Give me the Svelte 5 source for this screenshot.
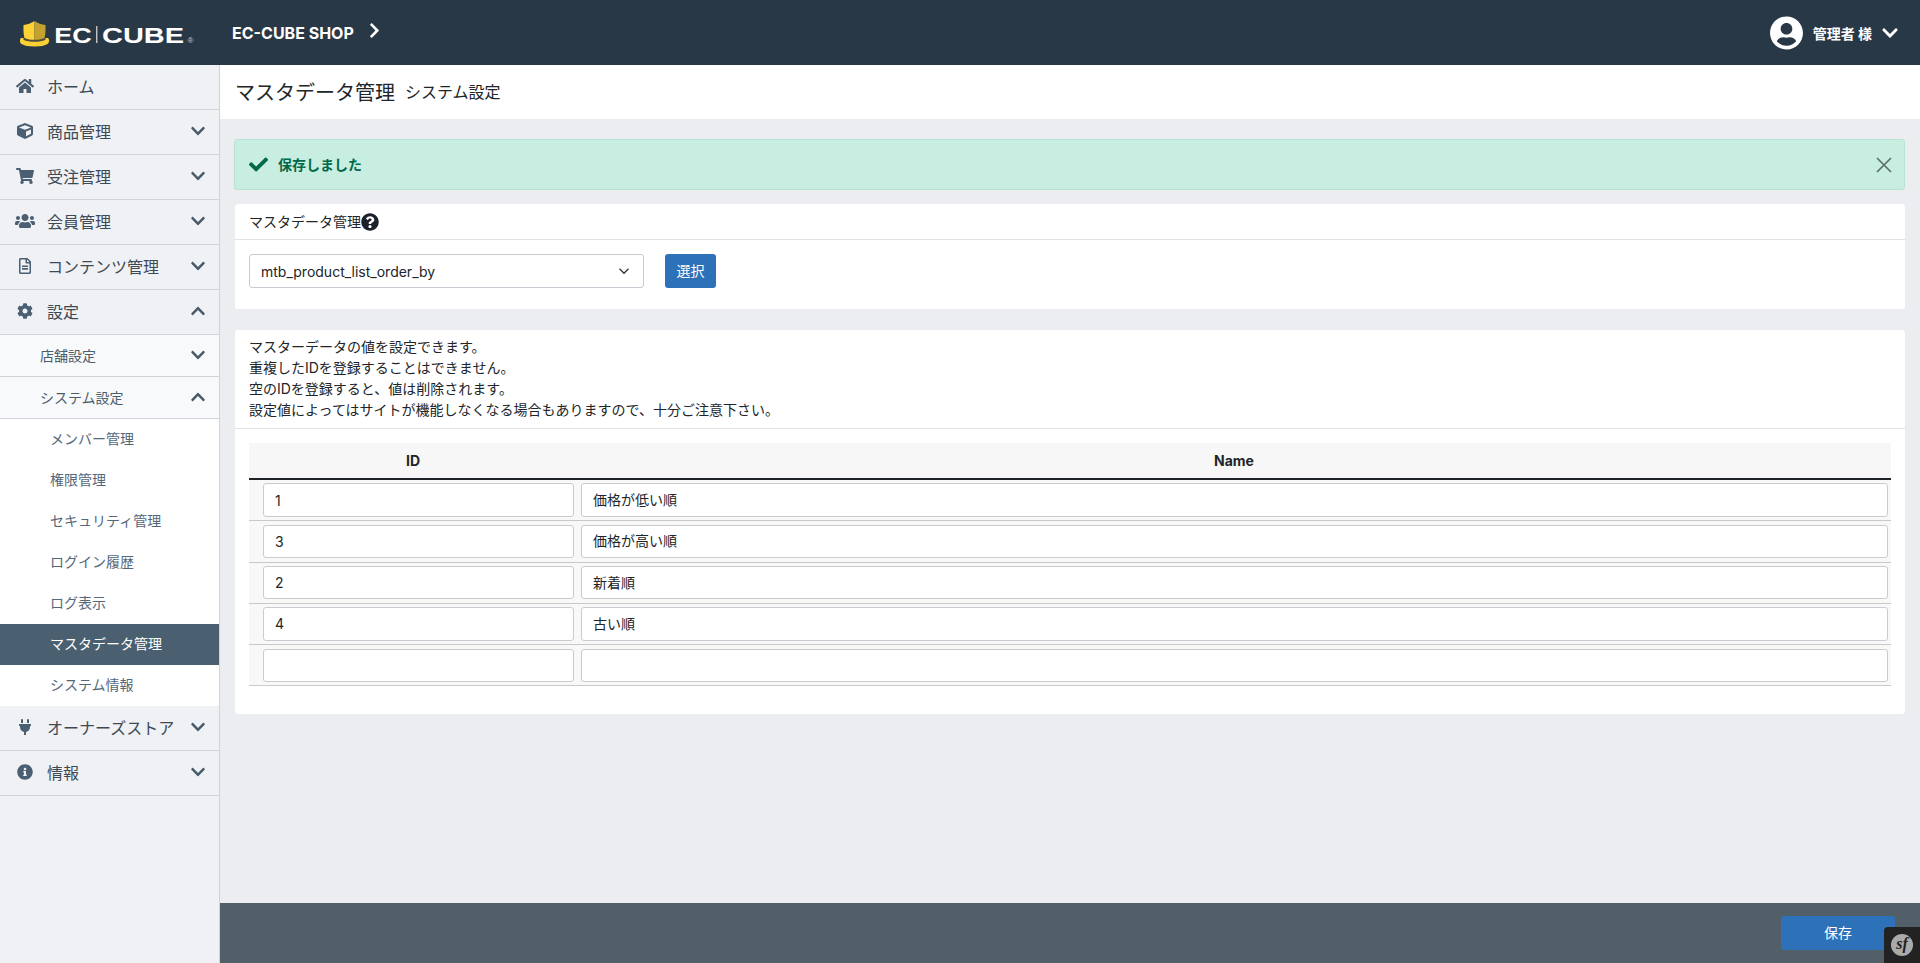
<script>
  // EC-CUBE admin: master data page
  const icons = {
    home: ['0 0 576 512', 'M280.37 148.26L96 300.11V464a16 16 0 0 0 16 16l112.06-.29a16 16 0 0 0 15.92-16V368a16 16 0 0 1 16-16h64a16 16 0 0 1 16 16v95.64a16 16 0 0 0 16 16.05L464 480a16 16 0 0 0 16-16V300L295.67 148.26a12.19 12.19 0 0 0-15.3 0zM571.6 251.47L488 182.56V44.05a12 12 0 0 0-12-12h-56a12 12 0 0 0-12 12v72.61L318.47 43a48 48 0 0 0-61 0L4.34 251.47a12 12 0 0 0-1.6 16.9l25.5 31A12 12 0 0 0 45.15 301l235.22-193.74a12.19 12.19 0 0 1 15.3 0L530.9 301a12 12 0 0 0 16.9-1.6l25.5-31a12 12 0 0 0-1.7-16.93z'],
    cube: ['0 0 512 512', 'M239.1 6.3l-208 78c-18.7 7-31.1 25-31.1 45v225.1c0 18.2 10.3 34.8 26.5 42.9l208 104c13.5 6.8 29.4 6.8 42.9 0l208-104c16.3-8.1 26.5-24.8 26.5-42.9V129.3c0-20-12.4-37.9-31.1-44.9l-208-78C262 2.2 250 2.2 239.1 6.3zM256 68.4l192 72v1.1l-192 78-192-78v-1.1l192-72zm32 356V275.5l160-65v133.9l-160 80z'],
    cart: ['0 0 576 512', 'M528.12 301.319l47.273-208C578.806 78.301 567.391 64 551.99 64H159.208l-9.166-44.81C147.758 8.021 137.93 0 126.529 0H24C10.745 0 0 10.745 0 24v16c0 13.255 10.745 24 24 24h69.883l70.248 343.435C147.325 417.1 136 435.222 136 456c0 30.928 25.072 56 56 56s56-25.072 56-56c0-15.674-6.447-29.835-16.824-40h209.647C430.447 426.165 424 440.326 424 456c0 30.928 25.072 56 56 56s56-25.072 56-56c0-22.172-12.888-41.332-31.579-50.405l5.517-24.276c3.413-15.018-8.002-29.319-23.403-29.319H218.117l-6.545-32h293.145c11.206 0 20.92-7.754 23.403-18.681z'],
    users: ['0 0 640 512', 'M96 224c35.3 0 64-28.7 64-64s-28.7-64-64-64-64 28.7-64 64 28.7 64 64 64zm448 0c35.3 0 64-28.7 64-64s-28.7-64-64-64-64 28.7-64 64 28.7 64 64 64zm32 32h-64c-17.6 0-33.5 7.1-45.1 18.6 40.3 22.1 68.9 62 75.1 109.4h66c17.7 0 32-14.3 32-32v-32c0-35.3-28.7-64-64-64zm-256 0c61.9 0 112-50.1 112-112S381.9 32 320 32 208 82.1 208 144s50.1 112 112 112zm76.8 32h-8.3c-20.8 10-43.9 16-68.5 16s-47.6-6-68.5-16h-8.3C179.6 288 128 339.6 128 403.2V432c0 26.5 21.5 48 48 48h288c26.5 0 48-21.5 48-48v-28.8c0-63.6-51.6-115.2-115.2-115.2zm-223.7-13.4C161.5 263.1 145.6 256 128 256H64c-35.3 0-64 28.7-64 64v32c0 17.7 14.3 32 32 32h65.9c6.3-47.4 34.9-87.3 75.2-109.4z'],
    file: ['0 0 384 512', 'M288 248v28c0 6.6-5.4 12-12 12H108c-6.6 0-12-5.4-12-12v-28c0-6.6 5.4-12 12-12h168c6.6 0 12 5.4 12 12zm-12 72H108c-6.6 0-12 5.4-12 12v28c0 6.6 5.4 12 12 12h168c6.6 0 12-5.4 12-12v-28c0-6.6-5.4-12-12-12zm108-188.1V464c0 26.5-21.5 48-48 48H48c-26.5 0-48-21.5-48-48V48C0 21.5 21.5 0 48 0h204.1C264.8 0 277 5.1 286 14.1L369.9 98c9 8.9 14.1 21.2 14.1 33.9zm-128-80V128h76.1L256 51.9zM336 464V176H232c-13.3 0-24-10.7-24-24V48H48v416h288z'],
    cog: ['0 0 512 512', 'M487.4 315.7l-42.6-24.6c4.3-23.2 4.3-47 0-70.2l42.6-24.6c4.9-2.8 7.1-8.6 5.5-14-11.1-35.6-30-67.8-54.7-94.6-3.8-4.1-10-5.1-14.8-2.3L380.8 110c-17.9-15.4-38.5-27.3-60.8-35.1V25.8c0-5.6-3.9-10.5-9.4-11.7-36.7-8.2-74.3-7.8-109.2 0-5.5 1.2-9.4 6.1-9.4 11.7V75c-22.2 7.9-42.8 19.8-60.8 35.1L88.7 85.5c-4.9-2.8-11-1.9-14.8 2.3-24.7 26.7-43.6 58.9-54.7 94.6-1.7 5.4.6 11.2 5.5 14L67.3 221c-4.3 23.2-4.3 47 0 70.2l-42.6 24.6c-4.9 2.8-7.1 8.6-5.5 14 11.1 35.6 30 67.8 54.7 94.6 3.8 4.1 10 5.1 14.8 2.3l42.6-24.6c17.9 15.4 38.5 27.3 60.8 35.1v49.2c0 5.6 3.9 10.5 9.4 11.7 36.7 8.2 74.3 7.8 109.2 0 5.5-1.2 9.4-6.1 9.4-11.7v-49.2c22.2-7.9 42.8-19.8 60.8-35.1l42.6 24.6c4.9 2.8 11 1.9 14.8-2.3 24.7-26.7 43.6-58.9 54.7-94.6 1.5-5.5-.7-11.3-5.6-14.1zM256 336c-44.1 0-80-35.9-80-80s35.9-80 80-80 80 35.9 80 80-35.9 80-80 80z'],
    plug: ['0 0 384 512', 'M320,32a32,32,0,0,0-64,0v96h64Zm48,128H16A16,16,0,0,0,0,176v32a16,16,0,0,0,16,16H32v32A160.07,160.07,0,0,0,160,412.8V512h64V412.8A160.07,160.07,0,0,0,352,256V224h16a16,16,0,0,0,16-16V176A16,16,0,0,0,368,160ZM128,32a32,32,0,0,0-64,0v96h64Z'],
    info: ['0 0 512 512', 'M256 8C119.043 8 8 119.083 8 256c0 136.997 111.043 248 248 248s248-111.003 248-248C504 119.083 392.957 8 256 8zm0 110c23.196 0 42 18.804 42 42s-18.804 42-42 42-42-18.804-42-42 18.804-42 42-42zm56 254c0 6.627-5.373 12-12 12h-88c-6.627 0-12-5.373-12-12v-24c0-6.627 5.373-12 12-12h12v-64h-12c-6.627 0-12-5.373-12-12v-24c0-6.627 5.373-12 12-12h64c6.627 0 12 5.373 12 12v100h12c6.627 0 12 5.373 12 12v24z']
  };

  const chevronDown = 'M207.029 381.476L12.686 187.132c-9.373-9.373-9.373-24.569 0-33.941l22.667-22.667c9.357-9.357 24.522-9.375 33.901-.04L224 284.505l154.745-154.021c9.379-9.335 24.544-9.317 33.901.04l22.667 22.667c9.373 9.373 9.373 24.569 0 33.941L240.971 381.476c-9.373 9.372-24.569 9.372-33.942 0z';
  const chevronUp = 'M240.971 130.524l194.343 194.343c9.373 9.373 9.373 24.569 0 33.941l-22.667 22.667c-9.357 9.357-24.522 9.375-33.901.04L224 227.495 69.255 381.516c-9.379 9.335-24.544 9.317-33.901-.04l-22.667-22.667c-9.373-9.373-9.373-24.569 0-33.941L207.03 130.525c9.372-9.373 24.568-9.373 33.941-.001z';

  const before = [
    { icon: 'home', label: 'ホーム' },
    { icon: 'cube', label: '商品管理', arrow: chevronDown },
    { icon: 'cart', label: '受注管理', arrow: chevronDown },
    { icon: 'users', label: '会員管理', arrow: chevronDown },
    { icon: 'file', label: 'コンテンツ管理', arrow: chevronDown },
    { icon: 'cog', label: '設定', arrow: chevronUp }
  ];
  const after = [
    { icon: 'plug', label: 'オーナーズストア', arrow: chevronDown },
    { icon: 'info', label: '情報', arrow: chevronDown }
  ];
  const leaves = ['メンバー管理', '権限管理', 'セキュリティ管理', 'ログイン履歴', 'ログ表示', 'マスタデータ管理', 'システム情報'];

  const notes = [
    'マスターデータの値を設定できます。',
    '重複したIDを登録することはできません。',
    '空のIDを登録すると、値は削除されます。',
    '設定値によってはサイトが機能しなくなる場合もありますので、十分ご注意下さい。'
  ];

  const rows = [
    { id: '1', name: '価格が低い順' },
    { id: '3', name: '価格が高い順' },
    { id: '2', name: '新着順' },
    { id: '4', name: '古い順' },
    { id: '', name: '' }
  ];
</script>

{#snippet navRow(item)}
  <a class="nav-top" href="#top">
    <span class="nav-icon">
      <svg viewBox={icons[item.icon][0]} class="ico-{item.icon}"><path d={icons[item.icon][1]} /></svg>
    </span>
    <span class="nav-label">{item.label}</span>
    {#if item.arrow}
      <svg class="nav-arrow" viewBox="0 0 448 512"><path d={item.arrow} /></svg>
    {/if}
  </a>
{/snippet}

<div class="page">
  <header class="topbar">
    <div class="logo">
      <svg width="175" height="32" viewBox="0 0 175 32">
        <path d="M.8 21c-1.300 2-1.300 4.500.7 6 2.500 1.700 7 2.500 13 2.500s10.500-.8 13-2.500c2-1.500 2-4 .7-6z" fill="#fcd134" />
        <path d="M3.500 22.800c2.800 1.400 6.300 2 11 2s8.200-.6 11-2v-3h-22z" fill="#4f4c3b" />
        <path d="M14.500 4C11 6.500 7.500 7.600 3.500 8c-.2 5 0 9 1 13 3 1.300 6 1.800 10 1.800z" fill="#fdd237" />
        <path d="M14.500 4c3.500 2.500 7 3.600 11 4 .2 5 0 9-1 13-3 1.300-6 1.800-10 1.800z" fill="#c3a22f" />
        <text x="34.300" y="25.700" class="mark" textLength="37.400" lengthAdjust="spacingAndGlyphs">EC</text>
        <rect x="76.300" y="9" width="1" height="17" fill="#fff" />
        <text x="82" y="25.700" class="mark" textLength="82" lengthAdjust="spacingAndGlyphs">CUBE</text>
        <text x="167.500" y="26" class="reg">®</text>
      </svg>
    </div>
    <a class="shop" href="#top">EC-CUBE SHOP</a>
    <svg class="shop-arrow" viewBox="0 0 320 512"><path d="M285.476 272.971L91.132 467.314c-9.373 9.373-24.569 9.373-33.941 0l-22.667-22.667c-9.357-9.357-9.375-24.522-.04-33.901L188.505 256 34.484 101.255c-9.335-9.379-9.317-24.544.04-33.901l22.667-22.667c9.373-9.373 24.569-9.373 33.941 0L285.475 239.03c9.373 9.372 9.373 24.568.001 33.941z" /></svg>
    <div class="user">
      <svg class="avatar" viewBox="0 0 496 512"><path d="M248 8C111 8 0 119 0 256s111 248 248 248 248-111 248-248S385 8 248 8zm0 96c48.600 0 88 39.400 88 88s-39.400 88-88 88-88-39.400-88-88 39.400-88 88-88zm0 344c-58.700 0-111.300-26.600-146.500-68.200 18.800-35.400 55.600-59.800 98.500-59.800 2.400 0 4.800.4 7.100 1.100 13 4.200 26.600 6.900 40.900 6.900 14.300 0 28-2.700 40.900-6.900 2.300-.7 4.700-1.100 7.100-1.100 42.900 0 79.700 24.400 98.500 59.800C359.300 421.400 306.700 448 248 448z" /></svg>
      <span class="user-name">管理者 様</span>
      <svg class="user-arrow" viewBox="0 0 448 512"><path d={chevronDown} /></svg>
    </div>
  </header>

  <div class="body">
    <nav class="sidebar">
      {#each before as item}
        {@render navRow(item)}
      {/each}
      <a class="nav-sub" href="#top">
        <span>店舗設定</span>
        <svg class="nav-arrow" viewBox="0 0 448 512"><path d={chevronDown} /></svg>
      </a>
      <a class="nav-sub" href="#top">
        <span>システム設定</span>
        <svg class="nav-arrow" viewBox="0 0 448 512"><path d={chevronUp} /></svg>
      </a>
      <ul class="leaves">
        {#each leaves as leaf, i}
          <li class:active={i === 5}>{leaf}</li>
        {/each}
      </ul>
      {#each after as item}
        {@render navRow(item)}
      {/each}
    </nav>

    <main class="main">
      <div class="page-head">
        <h1>マスタデータ管理</h1>
        <span>システム設定</span>
      </div>

      <div class="content">
        <div class="alert">
          <svg class="alert-check" viewBox="0 0 512 512"><path d="M173.898 439.404l-166.4-166.4c-9.997-9.997-9.997-26.206 0-36.204l36.203-36.204c9.997-9.998 26.207-9.998 36.204 0L192 312.69 432.095 72.596c9.997-9.997 26.207-9.997 36.204 0l36.203 36.204c9.997 9.997 9.997 26.206 0 36.204l-294.4 294.401c-9.998 9.997-26.207 9.997-36.204-.001z" /></svg>
          <span class="alert-text">保存しました</span>
          <svg class="alert-close" viewBox="0 0 16 16"><path d="M1 1l14 14M15 1L1 15" /></svg>
        </div>

        <section class="card">
          <div class="card-head">
            <span>マスタデータ管理</span>
            <svg class="help" viewBox="0 0 512 512"><path d="M504 256c0 136.997-111.043 248-248 248S8 392.997 8 256C8 119.083 119.043 8 256 8s248 111.083 248 248zM262.655 90c-54.497 0-89.255 22.957-116.549 63.758-3.536 5.286-2.353 12.415 2.715 16.258l34.699 26.31c5.205 3.947 12.621 3.008 16.665-2.122 17.864-22.658 30.113-35.797 57.303-35.797 20.429 0 45.698 13.148 45.698 32.958 0 14.976-12.363 22.667-32.534 33.976C247.128 238.528 216 254.941 216 296v4c0 6.627 5.373 12 12 12h56c6.627 0 12-5.373 12-12v-1.333c0-28.462 83.186-29.647 83.186-106.667 0-58.002-60.165-102-116.531-102zM256 338c-25.365 0-46 20.635-46 46 0 25.364 20.635 46 46 46s46-20.636 46-46c0-25.365-20.635-46-46-46z" /></svg>
          </div>
          <div class="picker">
            <div class="select-wrap">
              <select>
                <option>mtb_product_list_order_by</option>
              </select>
              <svg class="select-arrow" viewBox="0 0 16 16"><path d="M2 5l6 6 6-6" /></svg>
            </div>
            <button class="btn">選択</button>
          </div>
        </section>

        <section class="card">
          <div class="notes">
            {#each notes as note}
              <div>{note}</div>
            {/each}
          </div>
          <div class="table-wrap">
            <table>
              <colgroup>
                <col class="col-id" />
                <col />
              </colgroup>
              <thead>
                <tr>
                  <th>ID</th>
                  <th>Name</th>
                </tr>
              </thead>
              <tbody>
                {#each rows as row}
                  <tr>
                    <td class="td-id"><input type="text" value={row.id} readonly /></td>
                    <td class="td-name"><input type="text" value={row.name} readonly /></td>
                  </tr>
                {/each}
              </tbody>
            </table>
          </div>
        </section>
      </div>

      <div class="actionbar">
        <button class="btn btn-save">保存</button>
      </div>
    </main>
  </div>

  <div class="sf-toolbar">
    <span class="sf-badge">sf</span>
  </div>
</div>

<style>
  :global(body) {
    margin: 0;
    font-family: Inter, "Noto Sans CJK JP", sans-serif;
    font-size: 14px;
    color: #212529;
  }

  .page { height: 963px; display: flex; flex-direction: column; overflow: hidden; }

  .topbar {
    height: 65px;
    flex: none;
    background: #293846;
    color: #fff;
    display: flex;
    align-items: center;
    padding: 0 22px 0 20px;
  }
  .logo { width: 212px; height: 65px; position: relative; flex: none; }
  .logo svg { position: absolute; left: 0; top: 17px; }
  .mark { font: 700 22px "Liberation Sans", sans-serif; fill: #fff; }
  .reg { font: 8px "Liberation Sans", sans-serif; fill: #cfd3d6; }
  .shop { color: #fff; text-decoration: none; font-weight: 700; font-size: 16px; }
  .shop-arrow { width: 11px; height: 17px; margin-left: 15px; margin-top: -4px; fill: #fff; }
  .user { margin-left: auto; display: flex; align-items: center; }
  .avatar { width: 33px; height: 34px; fill: #fff; }
  .user-name { margin-left: 10px; font-size: 14px; font-weight: 700; }
  .user-arrow { width: 16px; height: 18px; margin-left: 10px; fill: #fff; }

  .body { flex: 1; display: flex; min-height: 0; }

  .sidebar {
    width: 219px;
    flex: none;
    background: #f0f1f4;
    border-right: 1px solid #d0d4da;
  }
  .nav-top {
    box-sizing: border-box;
    height: 45px;
    display: flex;
    align-items: center;
    border-bottom: 1px solid #d0d4da;
    padding: 0 14px 2px 16px;
    color: #3c4a55;
    font-size: 16px;
    text-decoration: none;
  }
  .nav-icon { width: 31px; display: flex; justify-content: flex-start; align-items: center; }
  .nav-icon svg { height: 16px; width: 18px; fill: #4a5f72; }
  .nav-icon .ico-users { width: 20px; margin-left: -1px; }
  .nav-label { flex: 1; }
  .nav-arrow { width: 14px; height: 16px; fill: #465a6b; flex: none; }
  .nav-sub {
    box-sizing: border-box;
    height: 42px;
    display: flex;
    align-items: center;
    justify-content: space-between;
    padding: 0 14px 2px 40px;
    background: #f8f9fa;
    border-bottom: 1px solid #d0d4da;
    color: #4c5d6b;
    text-decoration: none;
  }
  .leaves { list-style: none; margin: 0; padding: 0; background: #fff; }
  .leaves li { height: 41px; line-height: 39px; padding-left: 50px; color: #54687a; }
  .leaves li.active { background: #4a5f70; color: #fff; }

  .main { flex: 1; min-width: 0; display: flex; flex-direction: column; }
  .page-head {
    box-sizing: border-box;
    height: 54px;
    flex: none;
    background: #fff;
    display: flex;
    align-items: center;
    padding: 0 0 2px 15px;
    gap: 10px;
  }
  .page-head h1 { margin: 0; font-size: 20px; font-weight: 400; }
  .page-head span { font-size: 16px; }

  .content { flex: 1; background: #ecedf1; padding: 20px 15px 0 14px; }
  .alert {
    box-sizing: border-box;
    height: 51px;
    display: flex;
    align-items: center;
    padding: 0 12px 0 14px;
    background: #c7eee0;
    border: 1px solid #b8e2d2;
    border-radius: 3px;
    color: #00694a;
    font-weight: 700;
  }
  .alert-check { width: 19px; height: 19px; fill: #00694a; }
  .alert-text { margin: 0 0 2px 10px; }
  .alert-close { width: 16px; height: 16px; margin-left: auto; stroke: #5f6f69; stroke-width: 1.700; fill: none; }

  .card { background: #fff; border-radius: 3px; margin: 14px 0 0 1px; }
  .card + .card { margin-top: 21px; }
  .card-head {
    box-sizing: border-box;
    height: 36px;
    display: flex;
    align-items: center;
    padding-left: 14px;
    border-bottom: 1px solid #e1e3e6;
  }
  .card-head span { margin-bottom: 2px; }
  .help { width: 18px; height: 18px; fill: #1c2229; }
  .picker { display: flex; align-items: flex-start; padding: 14px 14px 21px; }
  .select-wrap { position: relative; width: 395px; }
  .select-wrap select {
    display: block;
    width: 100%;
    box-sizing: border-box;
    height: 34px;
    appearance: none;
    padding: 0 11px;
    font: inherit;
    color: #212529;
    background: #fff;
    border: 1px solid #c8ccd2;
    border-radius: 3px;
  }
  .select-arrow {
    position: absolute;
    right: 14px;
    top: 11px;
    width: 12px;
    height: 12px;
    fill: none;
    stroke: #343a40;
    stroke-width: 1.800;
    pointer-events: none;
  }
  .btn {
    font: inherit;
    color: #fff;
    background: #2d71b8;
    border: none;
    border-radius: 3px;
    height: 34px;
    width: 51px;
    margin-left: 21px;
    padding: 0 0 2px;
  }

  .notes { padding: 6px 14px 8px; line-height: 21px; border-bottom: 1px solid #e1e3e6; }
  .table-wrap { padding: 14px 14px 28px; }
  table { width: 100%; table-layout: fixed; border-collapse: collapse; }
  .col-id { width: 328px; }
  th {
    height: 35px;
    padding: 0;
    background: #f7f7f7;
    border-bottom: 2px solid #1f2328;
    font-weight: 700;
    font-size: 14px;
  }
  td {
    padding: 3.400px 3px;
    background: #f8f8f8;
    border-bottom: 1px solid #c9c9c9;
  }
  .td-id { padding-left: 14px; }
  .td-name { padding-left: 4px; }
  td input {
    display: block;
    width: 100%;
    box-sizing: border-box;
    height: 33.500px;
    padding: 0 11px;
    font: inherit;
    color: #212529;
    background: #fff;
    border: 1px solid #c8ccd2;
    border-radius: 3px;
    outline: none;
  }
  .td-name input { padding-bottom: 2px; }

  .actionbar {
    height: 60px;
    flex: none;
    background: #525e68;
    display: flex;
    align-items: flex-start;
    justify-content: flex-end;
    padding: 13px 25px 0 0;
    box-sizing: border-box;
  }
  .btn-save { width: 114px; margin: 0; }

  .sf-toolbar {
    position: fixed;
    right: 0;
    bottom: 0;
    width: 36px;
    height: 36px;
    background: #222;
    border-top-left-radius: 4px;
    display: flex;
    align-items: center;
    justify-content: center;
  }
  .sf-badge {
    width: 22px;
    height: 22px;
    border-radius: 50%;
    background: #aaa;
    color: #222;
    font: italic 700 16px/20px "Liberation Serif", serif;
    text-align: center;
  }
</style>
